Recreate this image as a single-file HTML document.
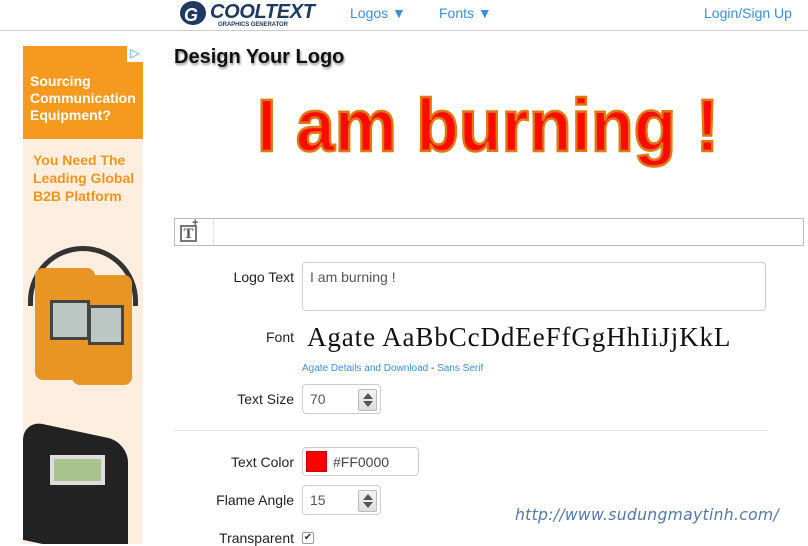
<!DOCTYPE html>
<html><head><meta charset="utf-8"><style>
*{margin:0;padding:0;box-sizing:border-box}
body{width:808px;height:544px;overflow:hidden;background:#fff;font-family:"Liberation Sans",Arial,sans-serif;position:relative}
.abs{position:absolute}
.nav a{color:#3a8fd8;font-size:14px;text-decoration:none;position:absolute;top:5px}
.lbl{position:absolute;font-size:14px;color:#222;text-align:right;width:120px}
.inp{position:absolute;border:1px solid #ccc;border-radius:4px;background:#fff;font-size:14px;color:#555}
.spin{position:absolute;right:3px;top:4px;width:19px;height:22px;background:linear-gradient(#f3f3f3,#ddd);border:1px solid #bbb;border-radius:2px}
.spin:before{content:"";position:absolute;left:4px;top:3px;border-left:5px solid transparent;border-right:5px solid transparent;border-bottom:6px solid #555}
.spin:after{content:"";position:absolute;left:4px;bottom:3px;border-left:5px solid transparent;border-right:5px solid transparent;border-top:6px solid #555}
</style></head><body>
<div class="abs" style="left:0;top:30px;width:808px;height:1px;background:#ccc"></div>
<svg class="abs" style="left:178px;top:0" width="140" height="28">
<ellipse cx="15" cy="13" rx="13" ry="12" fill="#1e3a60"/>
<text x="6" y="21" font-family="Liberation Sans" font-weight="bold" font-style="italic" font-size="18" fill="#fff">G</text>
<text x="32" y="18" font-family="Liberation Sans" font-weight="bold" font-style="italic" font-size="20" fill="#1e3a60" textLength="105">COOLTEXT</text>
<text x="40" y="26" font-family="Liberation Sans" font-weight="bold" font-size="6" fill="#1e3a60" textLength="70">GRAPHICS GENERATOR</text>
</svg>
<div class="nav"><a style="left:350px">Logos ▼</a><a style="left:439px">Fonts ▼</a><a style="left:704px">Login/Sign Up</a></div>
<div class="abs" style="left:23px;top:46px;width:120px;height:498px;background:#fdeee0;overflow:hidden">
<div class="abs" style="left:0;top:0;width:120px;height:93px;background:#f59a1e"></div>
<div class="abs" style="left:104px;top:0;width:16px;height:16px;background:#fff;color:#2aa3d8;font-size:12px;text-align:center">▷</div>
<div class="abs" style="left:7px;top:27px;color:#fff;font-weight:bold;font-size:14px;line-height:17px">Sourcing<br>Communication<br>Equipment?</div>
<div class="abs" style="left:10px;top:105px;color:#f0951c;font-weight:bold;font-size:14px;line-height:18px">You Need The<br>Leading Global<br>B2B Platform</div>
<div class="abs" style="left:5px;top:200px;width:110px;height:60px;border:5px solid #333;border-bottom:none;border-radius:55px 55px 0 0"></div>
<div class="abs" style="left:12px;top:222px;width:60px;height:112px;background:#e89524;border-radius:8px"></div>
<div class="abs" style="left:49px;top:229px;width:60px;height:110px;background:#e89524;border-radius:8px"></div>
<div class="abs" style="left:27px;top:254px;width:40px;height:40px;background:#bcc6c2;border:3px solid #444"></div>
<div class="abs" style="left:65px;top:259px;width:36px;height:40px;background:#bcc6c2;border:3px solid #444"></div>
<div class="abs" style="left:0;top:385px;width:105px;height:120px;background:#222;border-radius:20px 20px 0 0;transform:skewY(12deg)"></div>
<div class="abs" style="left:27px;top:409px;width:55px;height:30px;background:#a9c38c;border:4px solid #ddd"></div>
</div>
<div class="abs" style="left:174px;top:46px;font-size:20px;font-weight:bold;color:#111;text-shadow:1px 2px 2px #999">Design Your Logo</div>
<svg class="abs" style="left:250px;top:80px" width="480" height="90">
<text x="7" y="71" font-family="Liberation Sans" font-weight="bold" font-size="74" fill="#ff0a00" stroke="#e07a10" stroke-width="2.5" textLength="462" lengthAdjust="spacingAndGlyphs">I am burning !</text>
</svg>
<div class="abs" style="left:174px;top:218px;width:630px;height:28px;border:1px solid #bbb;background:#fff"></div>
<div class="abs" style="left:180px;top:225px;font-family:'Liberation Serif';font-size:15px;color:#555;border:2px solid #777;width:17px;height:17px;line-height:14px;text-align:center;font-weight:bold">T</div>
<div class="abs" style="left:192px;top:217px;font-size:11px;color:#555;font-weight:bold">+</div>
<div class="abs" style="left:213px;top:220px;width:1px;height:24px;background:#e5e5e5"></div>
<div class="lbl" style="left:174px;top:269px">Logo Text</div>
<div class="inp" style="left:302px;top:262px;width:464px;height:49px;padding:6px 7px">I am burning !</div>
<div class="lbl" style="left:174px;top:329px">Font</div>
<div class="abs" style="left:307px;top:322px;font-family:'Liberation Serif',serif;font-size:27px;color:#111;white-space:nowrap;letter-spacing:0.9px">Agate AaBbCcDdEeFfGgHhIiJjKkL</div>
<div class="abs" style="left:302px;top:363px;font-size:10px;color:#3a8fd8">Agate Details and Download <span style="color:#333">-</span> Sans Serif</div>
<div class="lbl" style="left:174px;top:391px">Text Size</div>
<div class="inp" style="left:302px;top:384px;width:79px;height:30px;padding:6px 7px">70<div class="spin"></div></div>
<div class="abs" style="left:174px;top:430px;width:594px;height:1px;background:#e5e5e5"></div>
<div class="lbl" style="left:174px;top:454px">Text Color</div>
<div class="inp" style="left:302px;top:447px;width:117px;height:29px;padding:6px 0 0 30px;color:#444">#FF0000</div>
<div class="abs" style="left:306px;top:451px;width:21px;height:21px;background:#f00;border:1px solid #c00"></div>
<div class="lbl" style="left:174px;top:492px">Flame Angle</div>
<div class="inp" style="left:302px;top:485px;width:79px;height:30px;padding:6px 7px">15<div class="spin"></div></div>
<div class="lbl" style="left:174px;top:530px">Transparent</div>
<div class="abs" style="left:302px;top:532px;width:12px;height:12px;border:1px solid #999;border-radius:2px;font-size:10px;line-height:10px;text-align:center;color:#333">✔</div>
<div class="abs" style="left:515px;top:506px;font-family:'DejaVu Sans',sans-serif;font-style:italic;font-size:15.6px;color:#5577aa;letter-spacing:0.3px">http://www.sudungmaytinh.com/</div>
</body></html>
